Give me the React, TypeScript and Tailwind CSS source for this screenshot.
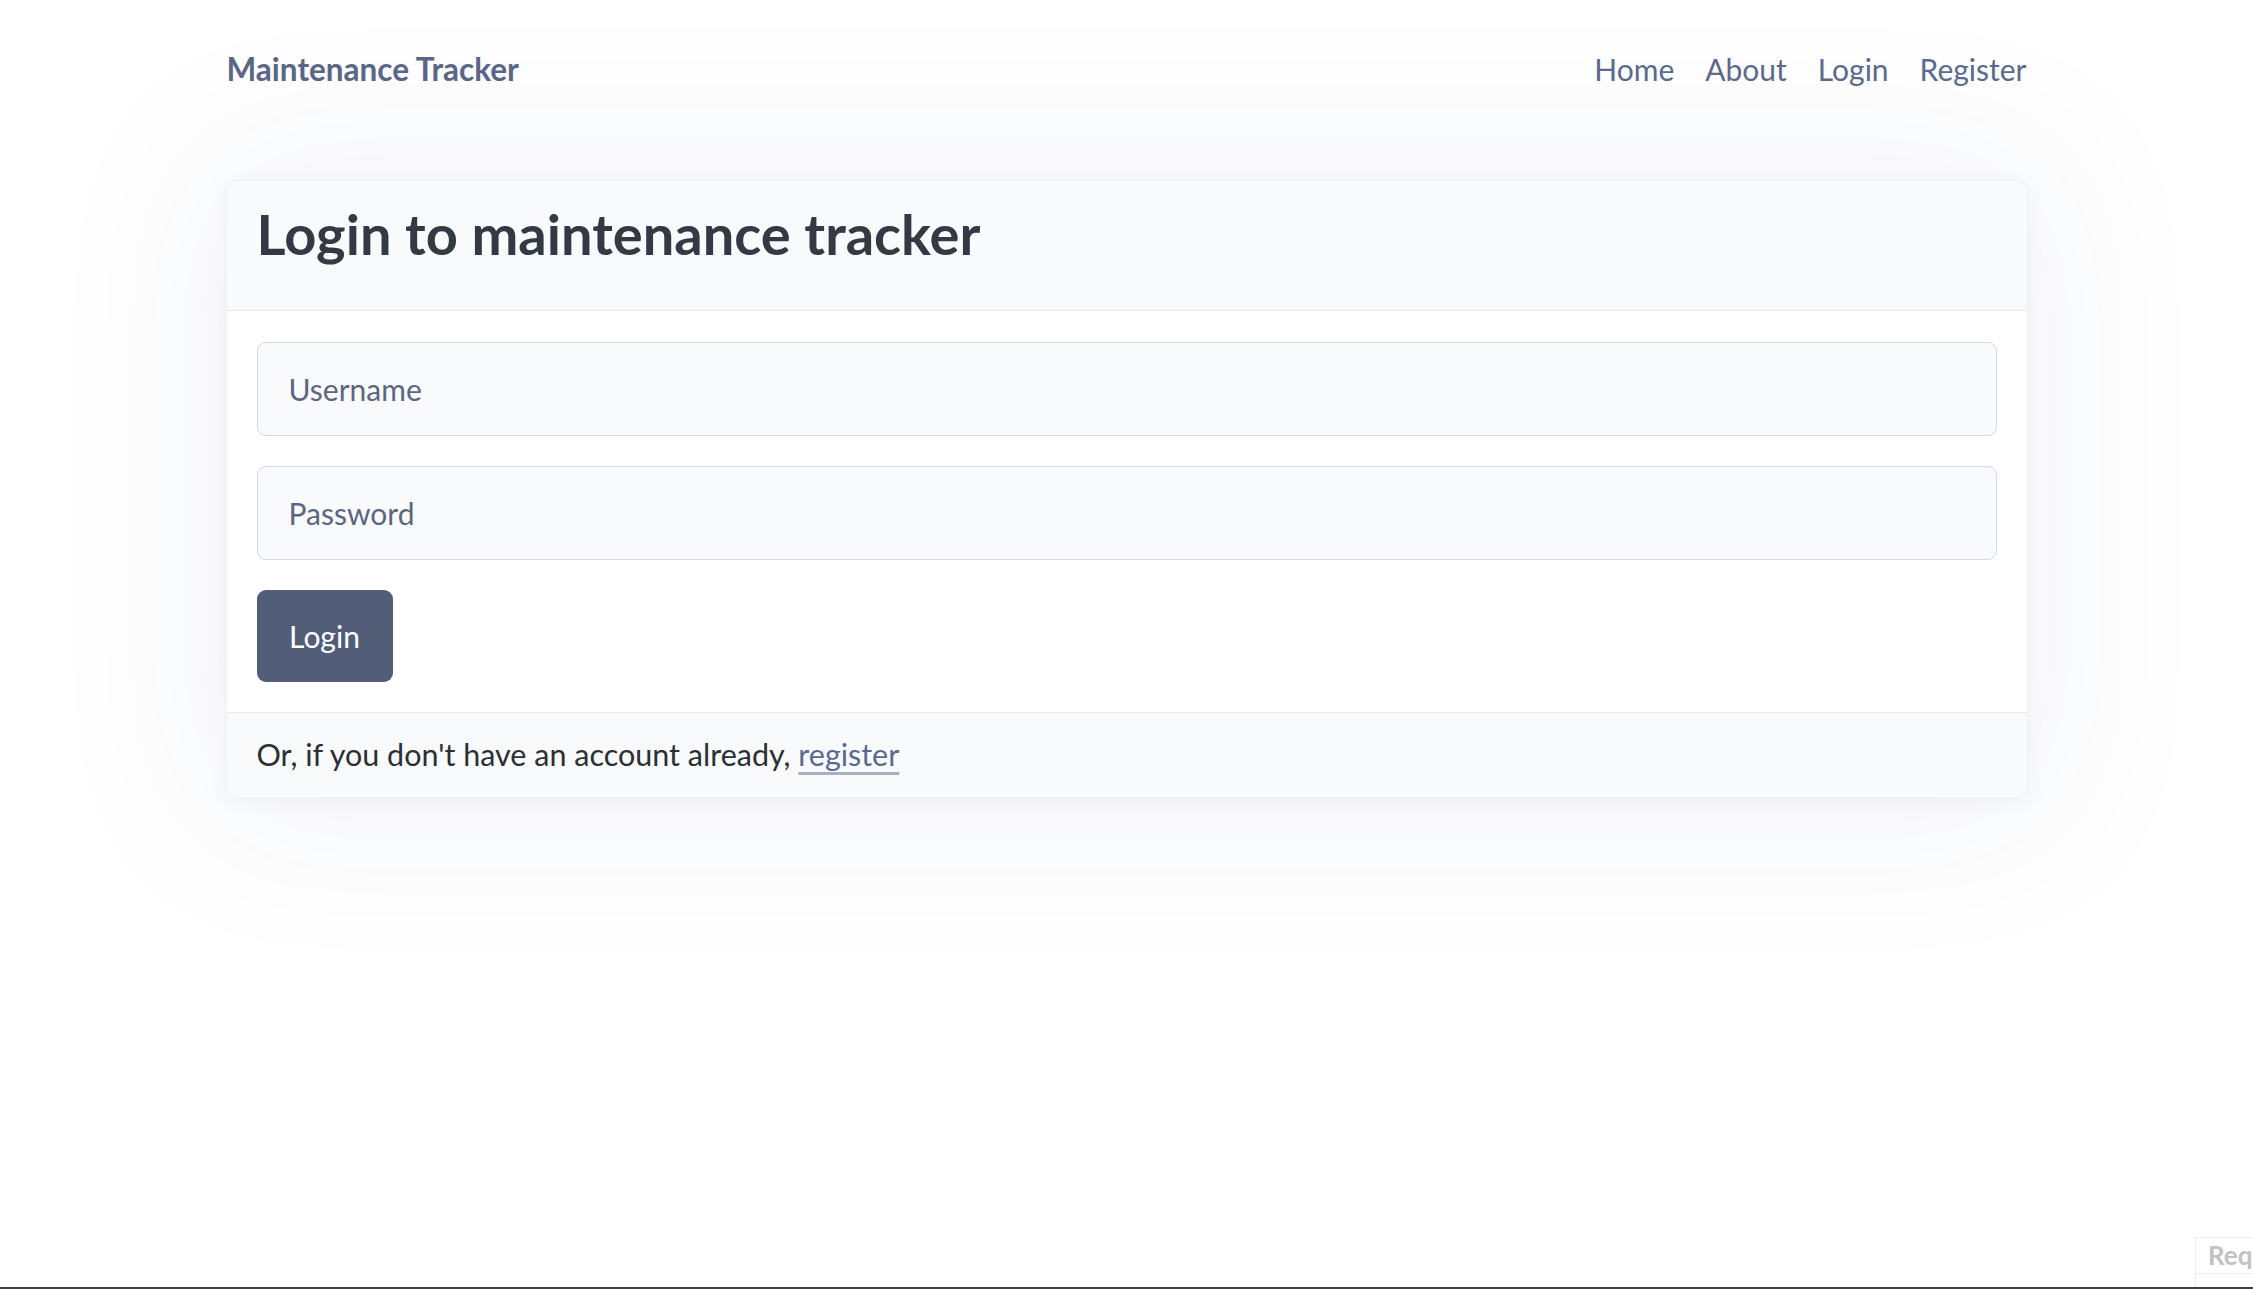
import React from "react";

const navLinks = ["Home", "About", "Login", "Register"];

const App = () => {
  return (
    <div
      className="relative min-h-[1289px] w-full bg-white text-[#2b2f36] overflow-hidden"
      style={{ fontFamily: "Lato, 'Noto Sans', sans-serif" }}
    >
      <div className="mx-auto w-[1800px]">
        {/* navbar */}
        <nav className="flex h-[138px] items-center justify-between">
          <a href="#" className="mt-[2px] text-[31.5px] font-bold text-[#5a6685]">
            Maintenance Tracker
          </a>
          <ul className="flex items-center gap-[31px]">
            {navLinks.map((link) => (
              <li key={link}>
                <a href="#" className="text-[30px] text-[#5b6a8c]">
                  {link}
                </a>
              </li>
            ))}
          </ul>
        </nav>

        {/* login card */}
        <div className="mt-[43px] overflow-hidden rounded-[9px] bg-white shadow-[0_0_0_1px_#eef0f3,0_0_170px_35px_rgba(40,50,110,0.05),0_4px_20px_rgba(40,50,90,0.05)]">
          <div className="h-[130px] border-b border-[#e6e8ec] bg-[#f9fafb] px-[30px] pt-[17px]">
            <h1 className="text-[56px] font-bold leading-[72px] text-[#343a44]">
              Login to maintenance tracker
            </h1>
          </div>
          <form
            className="flex flex-col gap-[30px] px-[30px] pt-[31px] pb-[30px]"
            onSubmit={(e) => e.preventDefault()}
          >
            <input
              type="text"
              placeholder="Username"
              className="h-[94px] w-full rounded-[9px] border border-[#d3d7e6] bg-[#f9fafb] px-[31px] text-[30px] text-[#2b2f36] placeholder:text-[#5c6680] outline-none"
            />
            <input
              type="password"
              placeholder="Password"
              className="h-[94px] w-full rounded-[9px] border border-[#d3d7e6] bg-[#f9fafb] px-[31px] text-[30px] text-[#2b2f36] placeholder:text-[#5c6680] outline-none"
            />
            <div>
              <button
                type="submit"
                className="h-[92px] w-[136px] rounded-[9px] bg-[#525e78] text-[30px] text-white"
              >
                Login
              </button>
            </div>
          </form>
          <div className="flex h-[85px] items-center border-t border-[#e6e8ec] bg-[#f9fafb] px-[30px] text-[30.5px] text-[#2b2f36]">
            <span>
              Or, if you don't have an account already,{" "}
              <a
                href="#"
                className="text-[#5a6a8f] underline decoration-[#a9b0c4] decoration-[3px] underline-offset-[6px]"
              >
                register
              </a>
            </span>
          </div>
        </div>
      </div>

      {/* debug panel peeking in the corner */}
      <div className="absolute left-[2195px] top-[1237px] h-[60px] w-[80px] border border-[#ececec] bg-white">
        <div className="border-b border-[#ececec] px-[12px] text-[26px] font-bold leading-[35px] text-[#c2c2c2]">
          Req
        </div>
      </div>
      <div className="absolute bottom-0 left-0 h-[2px] w-full bg-[#3f3f3f]" />
    </div>
  );
};

export default App;
